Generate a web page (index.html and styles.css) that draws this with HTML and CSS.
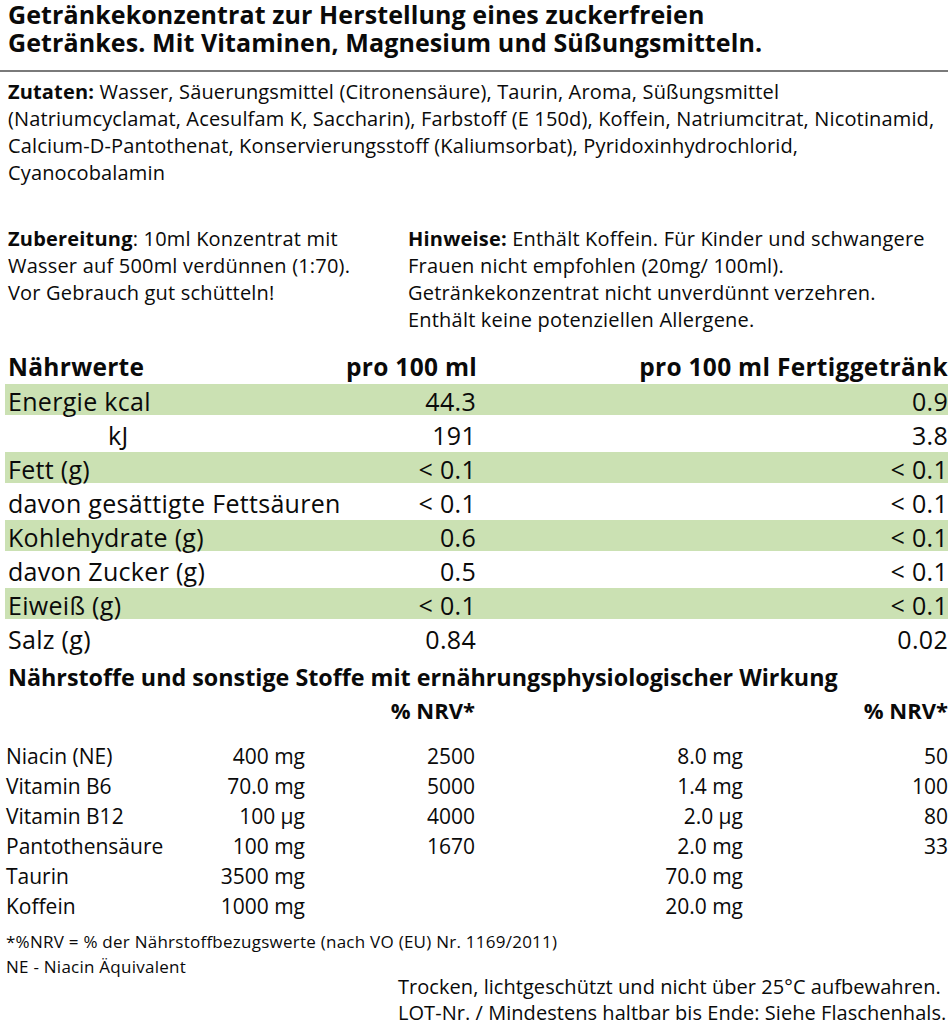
FILE: index.html
```html
<!DOCTYPE html>
<html lang="de">
<head>
<meta charset="utf-8">
<title>Getränkekonzentrat</title>
<link rel="stylesheet" href="styles.css">
</head>
<body>
<div class="label">
  <h1 class="title">Getränkekonzentrat zur Herstellung eines zuckerfreien<br>Getränkes. Mit Vitaminen, Magnesium und Süßungsmitteln.</h1>
  <hr class="rule">
  <p class="ingredients"><b>Zutaten:</b> Wasser, Säuerungsmittel (Citronensäure), Taurin, Aroma, Süßungsmittel<br>(Natriumcyclamat, Acesulfam K, Saccharin), Farbstoff (E 150d), Koffein, Natriumcitrat, Nicotinamid,<br>Calcium-D-Pantothenat, Konservierungsstoff (Kaliumsorbat), Pyridoxinhydrochlorid,<br>Cyanocobalamin</p>
  <div class="notes">
    <p class="note-left"><b>Zubereitung</b>: 10ml Konzentrat mit<br>Wasser auf 500ml verdünnen (1:70).<br>Vor Gebrauch gut schütteln!</p>
    <p class="note-right"><b>Hinweise:</b> Enthält Koffein. Für Kinder und schwangere<br>Frauen nicht empfohlen (20mg/ 100ml).<br>Getränkekonzentrat nicht unverdünnt verzehren.<br>Enthält keine potenziellen Allergene.</p>
  </div>
  <div class="nutrition">
    <div class="nrow head"><span>Nährwerte</span><span class="v">pro 100 ml</span><span class="v">pro 100 ml Fertiggetränk</span></div>
    <div class="nrow band"><span>Energie kcal</span><span class="v">44.3</span><span class="v">0.9</span></div>
    <div class="nrow"><span class="indent">kJ</span><span class="v">191</span><span class="v">3.8</span></div>
    <div class="nrow band"><span>Fett (g)</span><span class="v">&lt; 0.1</span><span class="v">&lt; 0.1</span></div>
    <div class="nrow"><span>davon gesättigte Fettsäuren</span><span class="v">&lt; 0.1</span><span class="v">&lt; 0.1</span></div>
    <div class="nrow band"><span>Kohlehydrate (g)</span><span class="v">0.6</span><span class="v">&lt; 0.1</span></div>
    <div class="nrow"><span>davon Zucker (g)</span><span class="v">0.5</span><span class="v">&lt; 0.1</span></div>
    <div class="nrow band"><span>Eiweiß (g)</span><span class="v">&lt; 0.1</span><span class="v">&lt; 0.1</span></div>
    <div class="nrow"><span>Salz (g)</span><span class="v">0.84</span><span class="v">0.02</span></div>
  </div>
  <h2 class="subhead">Nährstoffe und sonstige Stoffe mit ernährungsphysiologischer Wirkung</h2>
  <div class="vitamins">
    <div class="vrow vhead"><span></span><span></span><span class="v">% NRV*</span><span></span><span class="v">% NRV*</span></div>
    <div class="vrow first"><span>Niacin (NE)</span><span class="v">400 mg</span><span class="v">2500</span><span class="v">8.0 mg</span><span class="v">50</span></div>
    <div class="vrow"><span>Vitamin B6</span><span class="v">70.0 mg</span><span class="v">5000</span><span class="v">1.4 mg</span><span class="v">100</span></div>
    <div class="vrow"><span>Vitamin B12</span><span class="v">100 µg</span><span class="v">4000</span><span class="v">2.0 µg</span><span class="v">80</span></div>
    <div class="vrow"><span>Pantothensäure</span><span class="v">100 mg</span><span class="v">1670</span><span class="v">2.0 mg</span><span class="v">33</span></div>
    <div class="vrow"><span>Taurin</span><span class="v">3500 mg</span><span class="v"></span><span class="v">70.0 mg</span><span class="v"></span></div>
    <div class="vrow"><span>Koffein</span><span class="v">1000 mg</span><span class="v"></span><span class="v">20.0 mg</span><span class="v"></span></div>
  </div>
  <p class="footnote">*%NRV = % der Nährstoffbezugswerte (nach VO (EU) Nr. 1169/2011)<br>NE - Niacin Äquivalent</p>
  <p class="storage">Trocken, lichtgeschützt und nicht über 25°C aufbewahren.<br>LOT-Nr. / Mindestens haltbar bis Ende: Siehe Flaschenhals.</p>
</div>
</body>
</html>
```
FILE: styles.css
```css
html, body {
  margin: 0;
  padding: 0;
  background: #ffffff;
}
body {
  color: #0a0a0a;
  font-family: "Open Sans", "Noto Sans", sans-serif;
  width: 952px;
  overflow: hidden;
}
.label {
  padding: 0 4px 0 0;
}
p, h1, h2 {
  margin: 0;
}
b {
  font-weight: 700;
}
.title {
  font-size: 25px;
  font-weight: 700;
  line-height: 28px;
  letter-spacing: 0.1px;
  padding: 0 0 0 8px;
  white-space: nowrap;
}
.rule {
  border: 0;
  height: 2px;
  background: #7a7a7a;
  margin: 14px 0 0 0;
}
.ingredients {
  font-size: 20px;
  line-height: 27px;
  letter-spacing: 0.15px;
  padding: 6px 0 0 8px;
  white-space: nowrap;
}
.notes {
  display: flex;
  padding: 39px 0 0 8px;
  font-size: 20px;
  line-height: 27px;
  letter-spacing: 0.2px;
  white-space: nowrap;
}
.note-left {
  width: 400px;
}
.nutrition {
  padding: 17px 0 0 5px;
  display: flex;
  flex-direction: column;
}
.nrow {
  display: grid;
  grid-template-columns: 1fr 130px 472px;
  height: 31px;
  margin-bottom: 3px;
  align-items: center;
  font-size: 25px;
  letter-spacing: 0.3px;
  padding-left: 3px;
  white-space: nowrap;
}
.nrow .v {
  text-align: right;
}
.nrow.band {
  background: #cbe1b3;
}
.nrow.head {
  font-weight: 700;
  font-size: 24.5px;
  letter-spacing: 0.3px;
}
.indent {
  padding-left: 100px;
}
.subhead {
  font-size: 23.3px;
  font-weight: 700;
  letter-spacing: 0;
  line-height: 28px;
  padding: 7px 0 0 8px;
  white-space: nowrap;
}
.vitamins {
  font-size: 21px;
  padding: 3px 0 0 6px;
}
.vrow {
  display: grid;
  grid-template-columns: 194px 105px 170px 268px 205px;
  height: 30px;
  align-items: center;
  white-space: nowrap;
}
.vrow .v {
  text-align: right;
}
.vrow.vhead {
  font-weight: 700;
  font-size: 22px;
  height: 32px;
}
.vrow.first {
  margin-top: 15px;
}
.footnote {
  font-size: 17px;
  line-height: 25px;
  letter-spacing: 0.25px;
  padding: 8px 0 0 6px;
  white-space: nowrap;
}
.storage {
  font-size: 20px;
  line-height: 26px;
  letter-spacing: 0.05px;
  padding: 0 0 0 398px;
  margin-top: -5px;
  white-space: nowrap;
}
```
